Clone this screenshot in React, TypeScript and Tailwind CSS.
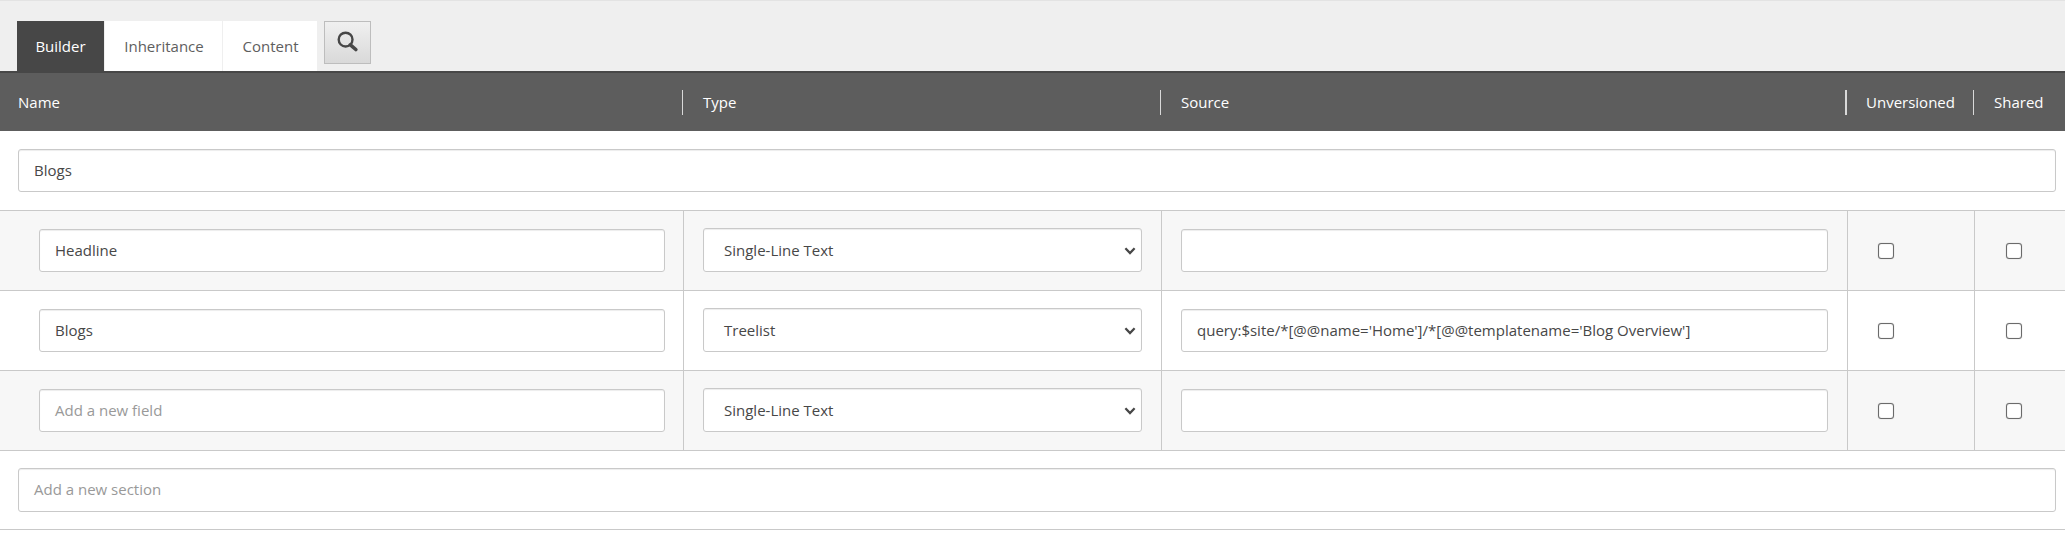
import type { ReactNode } from "react";

const field =
  "flex items-center border border-[#c9c9c9] rounded-[3px] bg-white pl-[15px] text-[15px] text-[#474747] shadow-[inset_0_1px_1px_rgba(0,0,0,0.075)]";

const cols = "grid grid-cols-[683px_478px_686px_127px_1fr]";

type Row = { name?: string; type: string; source: string };

const rows: Row[] = [
  { name: "Headline", type: "Single-Line Text", source: "" },
  { name: "Blogs", type: "Treelist", source: "query:$site/*[@@name='Home']/*[@@templatename='Blog Overview']" },
  { type: "Single-Line Text", source: "" },
];

function HeadCell({ children, bar, pad = "pl-5" }: { children: ReactNode; bar: string; pad?: string }) {
  return (
    <div className="flex items-center">
      <span className={`h-[25px] bg-[#d9d9d9] ${bar}`} />
      <span className={pad}>{children}</span>
    </div>
  );
}

function Check({ pad }: { pad: string }) {
  return (
    <div className={`border-l border-[#c9c9c9] pt-8 ${pad}`}>
      <div className="size-4 rounded-[3px] border border-[#6b6b6b] bg-white shadow-[0_0_1px_rgba(0,0,0,0.35),inset_0_0_1px_rgba(0,0,0,0.35)]" />
    </div>
  );
}

function FieldRow({ row, shaded }: { row: Row; shaded: boolean }) {
  return (
    <div className={`${cols} h-20 border-b border-[#c9c9c9] ${shaded ? "bg-[#f7f7f7]" : "bg-white"}`}>
      <div className="pl-[39px] pr-[18px] pt-[18px]">
        <div className={`${field} h-[43px] pb-0.5`}>
          {row.name ?? <span className="text-[#999999]">Add a new field</span>}
        </div>
      </div>
      <div className="border-l border-[#c9c9c9] pl-[19px] pr-[19px] pt-[17px]">
        <div className={`${field} h-11 justify-between pr-[5px]`}>
          <span className="pb-px pl-[5px]">{row.type}</span>
          <svg className="mt-0.5" width="12" height="8" viewBox="0 0 12 8" fill="none" stroke="#474747" strokeWidth="2.3">
            <path d="M1.4 1.3 6 6l4.6-4.7" />
          </svg>
        </div>
      </div>
      <div className="border-l border-[#c9c9c9] pl-[19px] pr-[19px] pt-[18px]">
        <div className={`${field} h-[43px] pb-0.5`}>{row.source}</div>
      </div>
      <Check pad="pl-[30px]" />
      <Check pad="pl-[31px]" />
    </div>
  );
}

export default function App() {
  return (
    <div className="h-[541px] w-full overflow-hidden bg-white font-['Open_Sans',sans-serif] text-[15px] leading-5">
      <div className="flex h-[73px] items-start border-t border-b-2 border-t-[#e3e3e3] border-b-[#474747] bg-[#efefef] pl-[17px] pt-5">
        <div className="flex h-[50px] w-[87px] items-center justify-center bg-[#474747] text-white">Builder</div>
        <div className="ml-px flex h-[50px] w-[117px] items-center justify-center bg-white pl-px text-[#5e5e5e]">Inheritance</div>
        <div className="ml-px flex h-[50px] w-[94px] items-center justify-center bg-white pl-px text-[#5e5e5e]">Content</div>
        <button className="ml-[7px] flex h-[43px] w-[47px] items-start border border-[#bdbdbd] bg-linear-to-b from-[#f0f0f0] to-[#d9d9d9] pl-[12px] pt-[9px]">
          <svg width="21" height="21" viewBox="0 0 21 21" fill="none" stroke="#474747">
            <circle cx="8.6" cy="8.6" r="6.9" strokeWidth="2.4" />
            <path d="m13.4 13.8 5.4 4.7" strokeWidth="3.6" strokeLinecap="round" />
          </svg>
        </button>
      </div>
      <div className="grid h-[58px] grid-cols-[682px_478px_685px_128px_1fr] bg-[#5d5d5d] text-white">
        <div className="flex items-center pl-[18px]">Name</div>
        <HeadCell bar="w-px">Type</HeadCell>
        <HeadCell bar="w-px">Source</HeadCell>
        <HeadCell bar="w-0.5" pad="pl-[19px]">Unversioned</HeadCell>
        <HeadCell bar="w-px">Shared</HeadCell>
      </div>
      <div className="h-20 border-b border-[#c9c9c9] pl-[18px] pr-[9px] pt-[18px]">
        <div className={`${field} h-[43px] pb-0.5`}>Blogs</div>
      </div>
      {rows.map((row, i) => (
        <FieldRow key={i} row={row} shaded={i % 2 === 0} />
      ))}
      <div className="h-[79px] border-b border-[#c9c9c9] pl-[18px] pr-[9px] pt-[17px]">
        <div className={`${field} h-11 pb-0.5`}>
          <span className="text-[#999999]">Add a new section</span>
        </div>
      </div>
    </div>
  );
}
